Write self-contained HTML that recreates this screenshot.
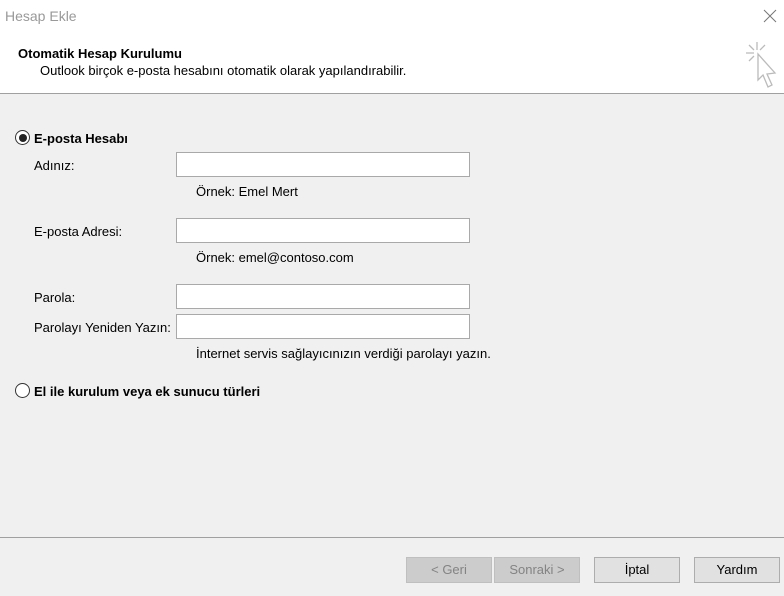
<!DOCTYPE html><html><head><style>
body{margin:0;width:784px;height:596px;background:#f0f0f0;font-family:"Liberation Sans",sans-serif;font-size:13px;color:#000;position:relative;overflow:hidden}
.a{position:absolute;white-space:nowrap}
.hdr{position:absolute;left:0;top:0;width:784px;height:93px;background:#fff;border-bottom:1px solid #a0a0a0}
.in{position:absolute;left:176px;width:294px;height:25px;background:#fff;border:1px solid #a9a9a9;box-sizing:border-box}
.btn{position:absolute;top:557px;height:26px;box-sizing:border-box;border:1px solid #adadad;background:#e1e1e1;text-align:center;line-height:24px}
.dis{background:#cccccc;border-color:#bfbfbf;color:#838383}
.rad{position:absolute;width:15px;height:15px;border:1px solid #333;border-radius:50%;box-sizing:border-box;background:#fff}
</style></head><body>
<div class="hdr"></div>
<div class="a" style="left:5px;top:8px;font-size:14px;color:#999">Hesap Ekle</div>
<svg class="a" style="left:763px;top:9px" width="14" height="14"><path d="M1 1L13 13M13 1L1 13" stroke="#777" stroke-width="1"/></svg>
<div class="a" style="left:18px;top:46px;font-weight:bold">Otomatik Hesap Kurulumu</div>
<div class="a" style="left:40px;top:63px">Outlook birçok e-posta hesabını otomatik olarak yapılandırabilir.</div>
<svg class="a" style="left:744px;top:40px" width="36" height="50"><g stroke="#bbb" stroke-width="1.3" fill="none"><path d="M13 2V10M2 13H10M5 5L10 10M21 5L16 10M5 21L10 16"/><path d="M14 14L14 40L19 35L24 47L28 45L23 34L31 33Z" fill="#fff"/></g></svg>
<div class="rad" style="left:15px;top:130px"><div style="position:absolute;left:2.5px;top:2.5px;width:8px;height:8px;border-radius:50%;background:#222"></div></div>
<div class="a" style="left:34px;top:131px;font-weight:bold">E-posta Hesabı</div>
<div class="a" style="left:34px;top:158px">Adınız:</div>
<div class="in" style="top:152px"></div>
<div class="a" style="left:196px;top:184px">Örnek: Emel Mert</div>
<div class="a" style="left:34px;top:224px">E-posta Adresi:</div>
<div class="in" style="top:218px"></div>
<div class="a" style="left:196px;top:250px">Örnek: emel@contoso.com</div>
<div class="a" style="left:34px;top:290px">Parola:</div>
<div class="in" style="top:284px"></div>
<div class="a" style="left:34px;top:320px">Parolayı Yeniden Yazın:</div>
<div class="in" style="top:314px"></div>
<div class="a" style="left:196px;top:346px">İnternet servis sağlayıcınızın verdiği parolayı yazın.</div>
<div class="rad" style="left:15px;top:383px"></div>
<div class="a" style="left:34px;top:384px;font-weight:bold">El ile kurulum veya ek sunucu türleri</div>
<div style="position:absolute;left:0;top:537px;width:784px;height:1px;background:#a0a0a0"></div>
<div class="btn dis" style="left:406px;width:86px">&lt; Geri</div>
<div class="btn dis" style="left:494px;width:86px">Sonraki &gt;</div>
<div class="btn" style="left:594px;width:86px">İptal</div>
<div class="btn" style="left:694px;width:86px">Yardım</div>
</body></html>
